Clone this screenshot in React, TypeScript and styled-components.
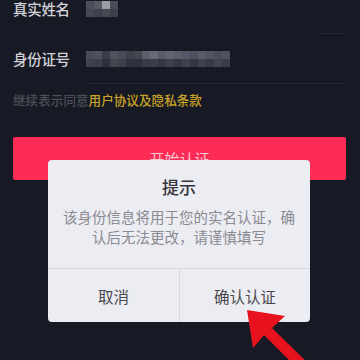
import React from "react";
import styled, { createGlobalStyle } from "styled-components";

const Global = createGlobalStyle`
  html, body { margin: 0; padding: 0; background: #171a24; }
  body { font-family: "Noto Sans CJK SC", "Noto Sans", sans-serif; }
  #root { width: 360px; height: 360px; overflow: hidden; position: relative; }
`;

const Page = styled.div`
  position: relative;
  width: 360px;
  height: 360px;
  box-sizing: border-box;
  padding: 0 14px 0 13px;
  background: #171a24;
  display: flex;
  flex-direction: column;
`;

const FieldRow = styled.div<{ $top: number }>`
  display: flex;
  align-items: center;
  height: 18px;
  margin-top: ${(p) => p.$top}px;
`;

const Label = styled.span`
  width: 73px;
  flex: none;
  font-size: 14.5px;
  font-weight: 500;
  line-height: 18px;
  color: #d2d2d7;
  letter-spacing: -0.3px;
`;

const Mosaic = styled.div<{ $cols: number }>`
  display: grid;
  grid-template-columns: repeat(${(p) => p.$cols}, 8px);
  grid-auto-rows: 8px;
  filter: blur(0.4px);
`;

const Cell = styled.div<{ $c: string }>`
  background: ${(p) => p.$c};
`;

const Divider = styled.div<{ $inset: number; $top: number }>`
  height: 1px;
  margin-top: ${(p) => p.$top}px;
  margin-left: ${(p) => p.$inset}px;
  background: #262935;
`;

const Agreement = styled.p`
  margin: 8px 0 0;
  font-size: 12.6px;
  line-height: 16px;
  color: #4c4e58;
  font-weight: 500;
`;

const Link = styled.span`
  color: #c9a227;
`;

const StartButton = styled.div`
  margin-top: 29px;
  height: 43px;
  border-radius: 2px;
  background: #fe2c55;
  color: #f6c8d2;
  font-size: 15px;
  display: flex;
  align-items: center;
  justify-content: center;
`;

const Dialog = styled.div`
  position: absolute;
  left: 48px;
  top: 160px;
  width: 262px;
  height: 162px;
  border-radius: 4px;
  background: #ececf3;
  display: flex;
  flex-direction: column;
  overflow: hidden;
`;

const Title = styled.h2`
  margin: 15px 0 0;
  font-size: 17px;
  font-weight: 500;
  line-height: 24px;
  color: #333338;
  text-align: center;
`;

const Body = styled.p`
  margin: 8px 0 0;
  padding: 0 10px;
  font-size: 14.5px;
  line-height: 20px;
  color: #8a8a90;
  text-align: center;
`;

const Actions = styled.div`
  margin-top: auto;
  height: 53px;
  border-top: 1px solid #d9d9e0;
  display: grid;
  grid-template-columns: 1fr 1fr;
`;

const ActionButton = styled.div<{ $divider?: boolean }>`
  display: flex;
  align-items: center;
  justify-content: center;
  font-size: 15.5px;
  color: #48484d;
  border-left: ${(p) => (p.$divider ? "1px solid #d9d9e0" : "none")};
`;

const Arrow = styled.svg`
  position: absolute;
  left: 0;
  top: 0;
  width: 360px;
  height: 360px;
  pointer-events: none;
`;

const nameCells = [
  "#4b4d59", "#575965", "#9c9ca5", "#4a4c57",
  "#464854", "#3f414d", "#474955", "#3d3f4b",
];

const idTop = [
  "#4a4c58", "#4e505c", "#3b3d4a", "#4f515d", "#494b57", "#3e404c",
  "#44464f", "#5e5f6a", "#6a6b76", "#5a5c67", "#626370", "#5c5e69",
  "#54566a", "#4e505c", "#5a5b67", "#52545f", "#4a4c57", "#50525e",
];
const idBottom = [
  "#40424e", "#3c3e4a", "#2f3140", "#44464f", "#3d3f4b", "#30323f",
  "#2f3140", "#393b47", "#3c3e4a", "#353744", "#3e404c", "#353744",
  "#3f414d", "#343643", "#40424e", "#383a46", "#42444f", "#3a3c48",
];

export default function App() {
  return (
    <>
      <Global />
      <Page>
        <FieldRow $top={0}>
          <Label>真实姓名</Label>
          <Mosaic $cols={4}>
            {nameCells.map((c, i) => (
              <Cell key={i} $c={c} />
            ))}
          </Mosaic>
        </FieldRow>
        <Divider $inset={306} $top={15} />
        <FieldRow $top={16}>
          <Label>身份证号</Label>
          <Mosaic $cols={18}>
            {[...idTop, ...idBottom].map((c, i) => (
              <Cell key={i} $c={c} />
            ))}
          </Mosaic>
        </FieldRow>
        <Divider $inset={73} $top={15} />
        <Agreement>
          继续表示同意<Link>用户协议及隐私条款</Link>
        </Agreement>
        <StartButton>开始认证</StartButton>

        <Dialog>
          <Title>提示</Title>
          <Body>
            该身份信息将用于您的实名认证，确
            <br />
            认后无法更改，请谨慎填写
          </Body>
          <Actions>
            <ActionButton>取消</ActionButton>
            <ActionButton $divider>确认认证</ActionButton>
          </Actions>
        </Dialog>

        <Arrow viewBox="0 0 360 360">
          <polygon
            points="247,310 285,316 272,328 314,369 306,377 264,335 253,348"
            fill="#e8121f"
          />
        </Arrow>
      </Page>
    </>
  );
}
